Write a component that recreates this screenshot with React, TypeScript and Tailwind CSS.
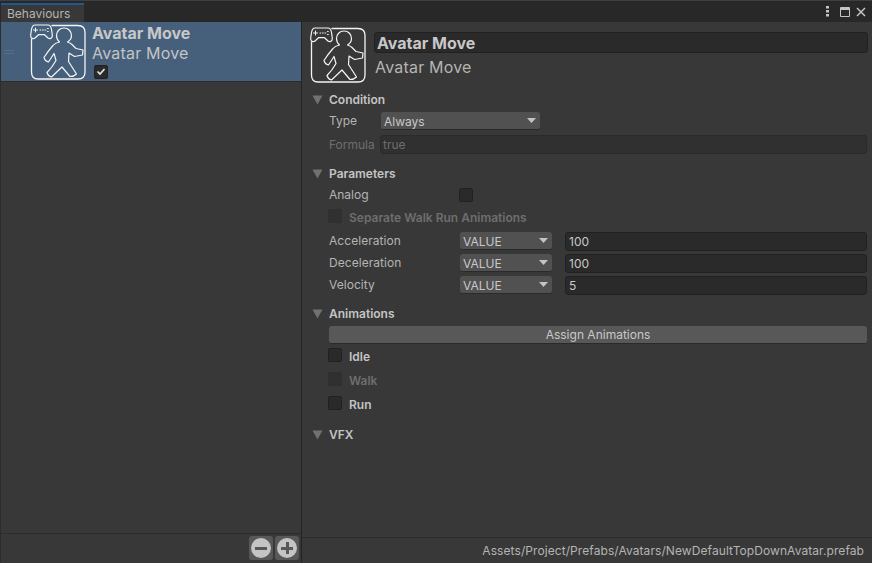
const AvatarIcon = ({ bg }: { bg: string }) => (
  <svg width={56} height={56} viewBox="0 0 56 56" fill="none" stroke="#f4f4f4" strokeLinejoin="round" strokeLinecap="round" className="shrink-0">
    <path d="M22 1.500H48Q55 1.500 55 8.500V48Q55 55 48 55H8Q1.500 55 1.500 48V15" strokeWidth="1.300" />
    <path d="M34 4C29.500 4 26.500 7.500 26.500 11.500C26.500 14 27.800 16.500 29.500 18C27 18.500 24.500 19.500 23 21.500C19.500 25.500 16.500 29.500 14 33.500C14.500 35.500 16 37.500 18.500 38L24 29.500L26 36.500C23.500 41 20.500 45 17 48.500C17.500 50.500 19.500 52.500 21.500 53L32 43L40 52.500C42.500 52.500 45 51.500 46.500 50L38.500 37.500L39 29L44.500 32.500L52.500 31L53 26L46 24.500L42 20.500C40.500 19 39 18.500 37.500 18C40 16.500 41.500 14 41.500 11.500C41.500 7.500 38.500 4 34 4Z" strokeWidth="1.200" />
    <path d="M5 1H18C20 1 21 2.500 21.500 5.500L22.300 11C22.500 14 20 15.500 18 14L14.500 10.700H8.500L5 14C3 15.500 0.300 14 0.700 11L1.500 5.500C2 2.500 3 1 5 1Z" strokeWidth="1.200" fill={bg} />
    <path d="M3.500 6H7.500M5.500 4V8" strokeWidth="1" />
    <path d="M10 6H10.800M12.500 6H13.300M15 6H15.800M17.500 4.500H18.300M17.500 7.500H18.300" strokeWidth="1" />
  </svg>
);

const Check = ({ faded, checked }: { faded?: boolean; checked?: boolean }) => (
  <div className={`w-[14px] h-[14px] rounded-[2px] border flex items-center justify-center shrink-0 ${faded ? "bg-[#303030] border-[#2f2f2f]" : "bg-[#2a2a2a] border-[#212121]"}`}>
    {checked && (
      <svg width="10" height="9" viewBox="0 0 10 9" fill="none" stroke="#e6e6e6" strokeWidth="1.700">
        <path d="M1.500 4.500L4 7L8.500 2" />
      </svg>
    )}
  </div>
);

const Triangle = () => (
  <svg width="11" height="10" viewBox="0 0 11 10" className="shrink-0">
    <path d="M0.500 0.500H10.500L5.500 9.500Z" fill="#717171" />
  </svg>
);

const Caret = () => (
  <svg width="9" height="5" viewBox="0 0 9 5" className="shrink-0">
    <path d="M0 0H9L4.500 5Z" fill="#c4c4c4" />
  </svg>
);

const Section = ({ title, className }: { title: string; className: string }) => (
  <div className={`flex items-center h-[18px] pl-[10px] gap-[6px] font-semibold text-[#c4c4c4] ${className}`}>
    <Triangle />
    <span>{title}</span>
  </div>
);

const ValueRow = ({ label, value, className }: { label: string; value: string; className: string }) => (
  <div className={`flex items-center h-[18px] ml-[27px] mr-[5px] ${className}`}>
    <span className="w-[131px] text-[#b4b4b4] tracking-[0.05px]">{label}</span>
    <div className="w-[92px] h-[18px] rounded-[3px] bg-[#515151] border-b border-[#2a2a2a] flex items-center justify-between pl-[3px] pr-[4px] text-[#c8c8c8]">
      <span className="pt-[2px]">VALUE</span>
      <Caret />
    </div>
    <div className="flex-1 ml-[13px] h-[19px] rounded-[3px] bg-[#2a2a2a] border border-[#212121] flex items-center pl-[3px] pt-[1px] text-[#c8c8c8]">
      {value}
    </div>
  </div>
);

const CheckRow = ({ label, faded, className }: { label: string; faded?: boolean; className: string }) => (
  <div className={`flex items-center h-[16px] ml-[26px] gap-[7px] font-semibold ${faded ? "text-[#6e6e6e]" : "text-[#c4c4c4]"} ${className}`}>
    <Check faded={faded} />
    <span className="pt-[4px]">{label}</span>
  </div>
);

export default function App() {
  return (
    <div className="w-[872px] h-[563px] overflow-hidden flex flex-col bg-[#383838] text-[12px] leading-none text-[#c4c4c4]" style={{ fontFamily: "Inter, sans-serif" }}>
      {/* title bar */}
      <div className="h-[22px] shrink-0 bg-[#282828] border-t border-[#3f3f3f] flex items-end justify-between pl-px">
        <div className="w-[83px] h-[19px] bg-[#383838] border-t-2 border-[#1d5a8f] flex items-center pl-[6px] text-[#b4b4b4]">Behaviours</div>
        <div className="flex items-center self-center pr-[6px]">
          <svg width="3" height="11" viewBox="0 0 3 11" fill="#c4c4c4" className="mr-[11px]"><rect width="3" height="2.500" /><rect y="4" width="3" height="2.500" /><rect y="8" width="3" height="2.500" /></svg>
          <svg width="10" height="10" viewBox="0 0 10 10" fill="none" stroke="#c4c4c4" className="mr-[6px]"><path d="M0.500 0.500H9.500V9.500H0.500Z" /><path d="M0 2H10" strokeWidth="2" /></svg>
          <svg width="10" height="10" viewBox="0 0 10 10" fill="none" stroke="#c4c4c4" strokeWidth="1.500"><path d="M1 1L9 9M9 1L1 9" /></svg>
        </div>
      </div>

      <div className="flex flex-1 min-h-0">
        {/* behaviour list */}
        <div className="w-[302px] shrink-0 border-r border-l border-[#232323] border-l-[#2c2c2c] flex flex-col">
          <div className="h-[60px] bg-[#46607c] flex items-center border-b border-[#2c2c2c]">
            <div className="w-[10px] ml-[3px] mr-[16px] flex flex-col gap-[2px]">
              <div className="h-px bg-[#56708c]" />
              <div className="h-px bg-[#56708c]" />
            </div>
            <AvatarIcon bg="#46607c" />
            <div className="ml-[6px] flex flex-col items-start">
              <span className="text-[16px] font-bold text-[#c8c8c8]">Avatar Move</span>
              <span className="text-[16px] text-[#c4c4c4] mt-[4px] tracking-[0.2px]">Avatar Move</span>
              <div className="mt-[4px] ml-[2px]"><Check checked /></div>
            </div>
          </div>
          <div className="flex-1" />
          <div className="h-[30px] shrink-0 border-t border-[#2c2c2c] flex items-start justify-end gap-[2px] pt-[2px] pr-[2px] bg-[#383838]">
            <div className="w-[24px] h-[24px] rounded-[3px] bg-[#585858] flex items-center justify-center">
              <div className="w-[20px] h-[20px] rounded-full bg-[#c4c4c4] flex items-center justify-center">
                <div className="w-[12px] h-[3px] bg-[#585858]" />
              </div>
            </div>
            <div className="w-[24px] h-[24px] rounded-[3px] bg-[#585858] flex items-center justify-center">
              <div className="relative w-[20px] h-[20px] rounded-full bg-[#c4c4c4] flex items-center justify-center">
                <div className="w-[12px] h-[3px] bg-[#585858]" />
                <div className="absolute w-[3px] h-[12px] bg-[#585858]" />
              </div>
            </div>
          </div>
        </div>

        {/* inspector */}
        <div className="flex-1 flex flex-col min-w-0">
          <div className="flex-1 min-h-0">
            <div className="flex pl-[8px] pr-[4px] pt-[5px]">
              <AvatarIcon bg="#383838" />
              <div className="flex-1 ml-[8px] pt-[5px]">
                <div className="h-[21px] rounded-[3px] bg-[#2a2a2a] border border-[#212121] flex items-center pl-[2px] text-[16px] font-bold text-[#c8c8c8]">Avatar Move</div>
                <div className="mt-[6px] pl-[1px] text-[16px] tracking-[0.2px] text-[#b4b4b4]">Avatar Move</div>
              </div>
            </div>

            <Section title="Condition" className="mt-[8px]" />
            <div className="flex items-center h-[18px] ml-[27px] mt-[3px]">
              <span className="w-[52px] text-[#b4b4b4]">Type</span>
              <div className="w-[159px] h-[18px] rounded-[3px] bg-[#515151] border-b border-[#2a2a2a] flex items-center justify-between pl-[3px] pr-[4px] text-[#c8c8c8]">
                <span className="pt-[2px]">Always</span>
                <Caret />
              </div>
            </div>
            <div className="flex items-center h-[19px] ml-[27px] mr-[5px] mt-[5px]">
              <span className="w-[51px] text-[#6e6e6e]">Formula</span>
              <div className="flex-1 h-[19px] rounded-[3px] bg-[#303030] border border-[#2a2a2a] flex items-center pl-[2px] text-[#6e6e6e]">true</div>
            </div>

            <Section title="Parameters" className="mt-[11px]" />
            <div className="flex items-center h-[14px] ml-[27px] mt-[5px]">
              <span className="w-[130px] text-[#b4b4b4]">Analog</span>
              <Check />
            </div>
            <CheckRow label="Separate Walk Run Animations" faded className="mt-[6px]" />
            <ValueRow label="Acceleration" value="100" className="mt-[8px]" />
            <ValueRow label="Deceleration" value="100" className="mt-[4px]" />
            <ValueRow label="Velocity" value="5" className="mt-[4px]" />

            <Section title="Animations" className="mt-[11px]" />
            <div className="h-[18px] ml-[27px] mr-[5px] mt-[3px] rounded-[3px] bg-[#585858] border-b border-[#2a2a2a] flex items-center justify-center text-[#c8c8c8]">Assign Animations</div>
            <CheckRow label="Idle" className="mt-[3px]" />
            <CheckRow label="Walk" faded className="mt-[8px]" />
            <CheckRow label="Run" className="mt-[8px]" />

            <Section title="VFX" className="mt-[15px]" />
          </div>
          <div className="h-[26px] shrink-0 border-t border-[#2c2c2c] flex items-center justify-end pr-[8px] text-[#b4b4b4] tracking-[0.08px]">
            Assets/Project/Prefabs/Avatars/NewDefaultTopDownAvatar.prefab
          </div>
        </div>
      </div>
    </div>
  );
}
